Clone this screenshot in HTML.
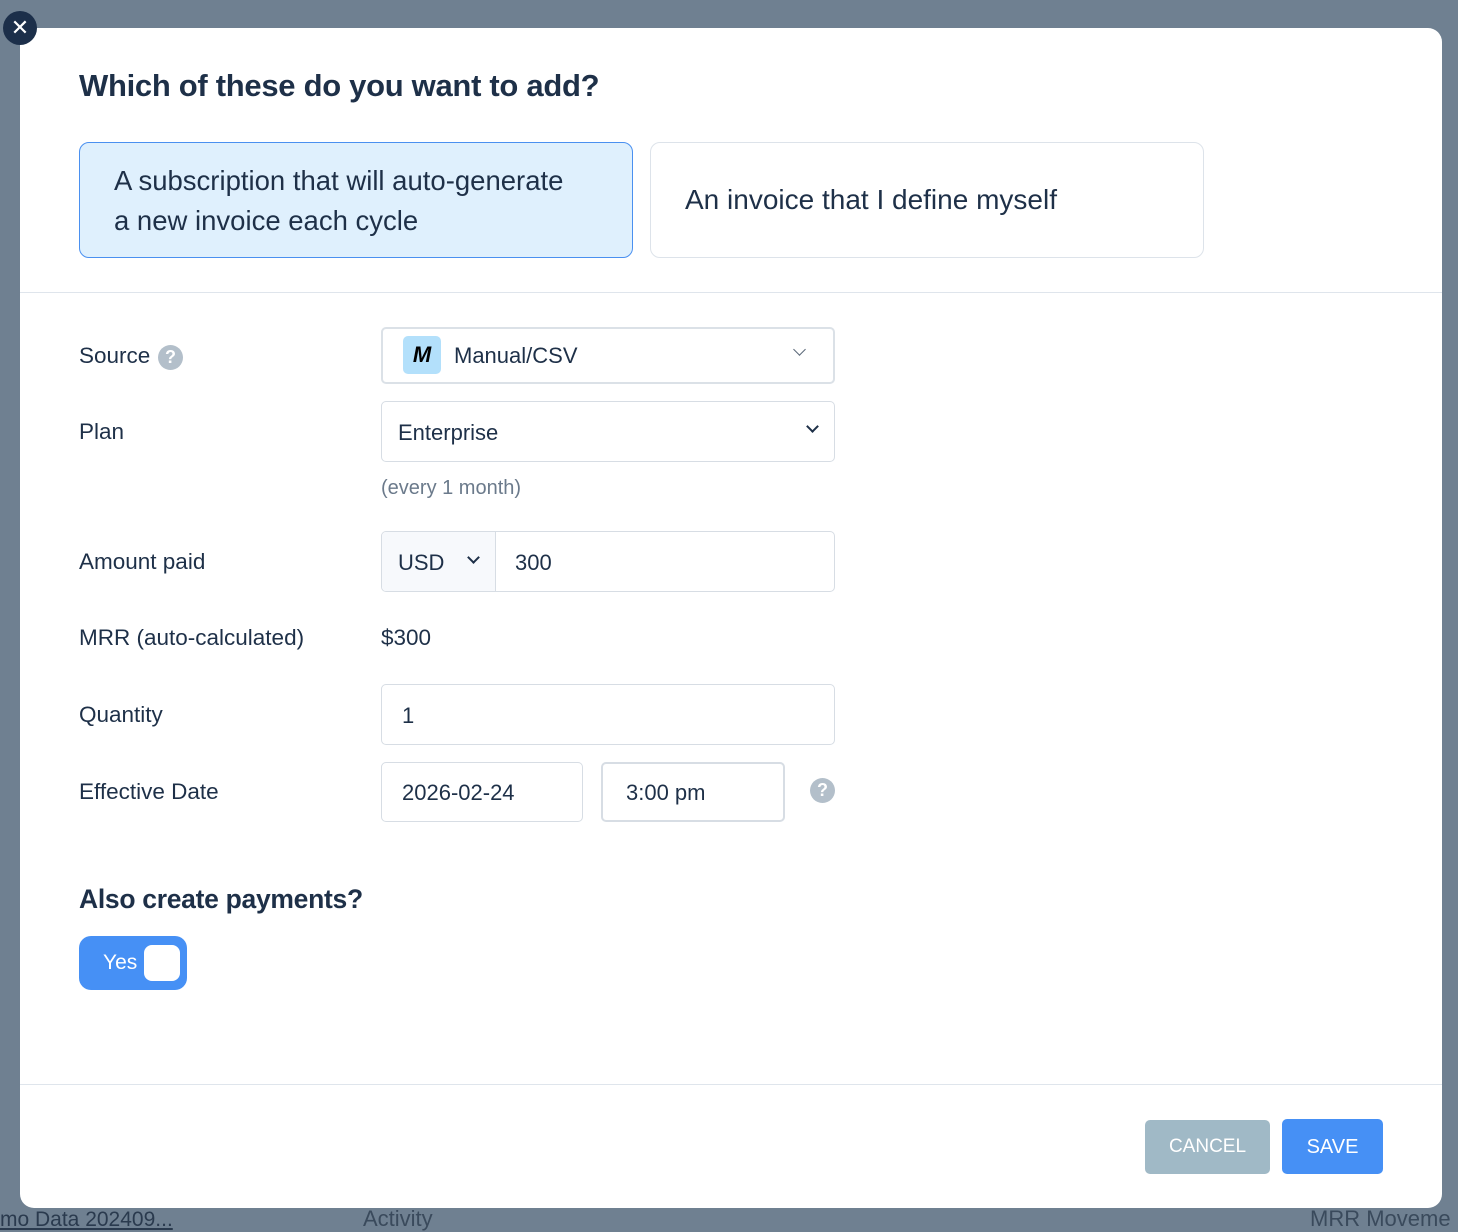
<!DOCTYPE html>
<html><head><meta charset="utf-8"><style>
*{box-sizing:border-box;margin:0;padding:0}
body{width:1458px;height:1230px;background:#6f8091;font-family:"Liberation Sans",sans-serif;color:#1e3048;position:relative;overflow:hidden}
.a{position:absolute}
.modal{left:20px;top:28px;width:1422px;height:1180px;background:#fff;border-radius:14px}
.lbl{font-size:22.5px;left:79px}
.box{border:1px solid #d7dde4;border-radius:5px;background:#fff;font-size:22px}
.chev{position:absolute;width:9px;height:9px;border-right:2px solid #1e3048;border-bottom:2px solid #1e3048;transform:rotate(45deg)}
.q{border-radius:50%;background:#b3bfca;color:#fff;font-weight:bold;text-align:center}
</style></head><body>
<div class="a" style="left:0;top:1208px;font-size:21px;color:#2a3a4e;text-decoration:underline">mo Data 202409...</div>
<div class="a" style="left:363px;top:1206px;font-size:22px;color:#3a4a5c">Activity</div>
<div class="a" style="left:1310px;top:1206px;font-size:22px;color:#3a4a5c">MRR Moveme</div>
<div class="a modal"></div>
<div class="a" style="left:3px;top:11px;width:34px;height:34px;border-radius:50%;background:#1c2f4a;color:#fff;font-size:22px;text-align:center;line-height:33px">✕</div>
<div class="a" style="left:79px;top:68px;font-size:31px;font-weight:bold;letter-spacing:-0.3px">Which of these do you want to add?</div>
<div class="a" style="left:79px;top:142px;width:554px;height:116px;background:#dff0fd;border:1px solid #4a90f0;border-radius:10px;font-size:27.5px;line-height:40px;padding:18px 0 0 34px;white-space:nowrap">A subscription that will auto-generate<br>a new invoice each cycle</div>
<div class="a" style="left:650px;top:142px;width:554px;height:116px;background:#fff;border:1px solid #dde3ea;border-radius:10px;font-size:28px;padding:41px 0 0 34px">An invoice that I define myself</div>
<div class="a" style="left:20px;top:292px;width:1422px;height:1px;background:#dfe5ec"></div>

<div class="a lbl" style="top:343px">Source</div>
<div class="a q" style="left:158px;top:345px;width:25px;height:25px;font-size:18px;line-height:25px">?</div>
<div class="a box" style="left:381px;top:327px;width:454px;height:57px;border-width:2px;border-color:#dbe1e7">
 <div class="a" style="left:20px;top:7px;width:38px;height:38px;background:#b3e0fb;border-radius:5px;font-weight:bold;font-style:italic;font-size:22px;text-align:center;line-height:38px;color:#000">M</div>
 <div class="a" style="left:71px;top:14px">Manual/CSV</div>
 <div class="chev" style="left:412px;top:16px;border-width:1.5px;border-color:#5a6878"></div>
</div>

<div class="a lbl" style="top:419px">Plan</div>
<div class="a box" style="left:381px;top:401px;width:454px;height:61px">
 <div class="a" style="left:16px;top:18px">Enterprise</div>
 <div class="chev" style="left:426px;top:20px"></div>
</div>
<div class="a" style="left:381px;top:477px;font-size:20px;color:#6b7a8b">(every 1 month)</div>

<div class="a lbl" style="top:549px">Amount paid</div>
<div class="a box" style="left:381px;top:531px;width:454px;height:61px;overflow:hidden">
 <div class="a" style="left:0;top:0;width:114px;height:61px;background:#f7f9fc;border-right:1px solid #d7dde4"></div>
 <div class="a" style="left:16px;top:18px">USD</div>
 <div class="chev" style="left:87px;top:21px"></div>
 <div class="a" style="left:133px;top:18px">300</div>
</div>

<div class="a lbl" style="top:625px">MRR (auto-calculated)</div>
<div class="a" style="left:381px;top:625px;font-size:22.5px">$300</div>

<div class="a lbl" style="top:702px">Quantity</div>
<div class="a box" style="left:381px;top:684px;width:454px;height:61px"><div class="a" style="left:20px;top:18px">1</div></div>

<div class="a lbl" style="top:779px">Effective Date</div>
<div class="a box" style="left:381px;top:762px;width:202px;height:60px"><div class="a" style="left:20px;top:17px">2026-02-24</div></div>
<div class="a box" style="left:601px;top:762px;width:184px;height:60px;border-width:2px"><div class="a" style="left:23px;top:16px">3:00 pm</div></div>
<div class="a q" style="left:810px;top:778px;width:25px;height:25px;font-size:18px;line-height:25px">?</div>

<div class="a" style="left:79px;top:884px;font-size:26.5px;font-weight:bold;letter-spacing:-0.3px">Also create payments?</div>
<div class="a" style="left:79px;top:936px;width:108px;height:54px;background:#4690f5;border-radius:12px">
 <div class="a" style="left:24px;top:15px;color:#fff;font-size:21px">Yes</div>
 <div class="a" style="left:65px;top:9px;width:36px;height:36px;background:#fff;border-radius:8px"></div>
</div>

<div class="a" style="left:20px;top:1084px;width:1422px;height:1px;background:#dfe5ec"></div>
<div class="a" style="left:1145px;top:1120px;width:125px;height:54px;background:#a0b9c6;border-radius:5px;color:#fff;font-size:19px;text-align:center;line-height:54px">CANCEL</div>
<div class="a" style="left:1282px;top:1119px;width:101px;height:55px;background:#4690f5;border-radius:5px;color:#fff;font-size:20px;text-align:center;line-height:57px">SAVE</div>
</body></html>
